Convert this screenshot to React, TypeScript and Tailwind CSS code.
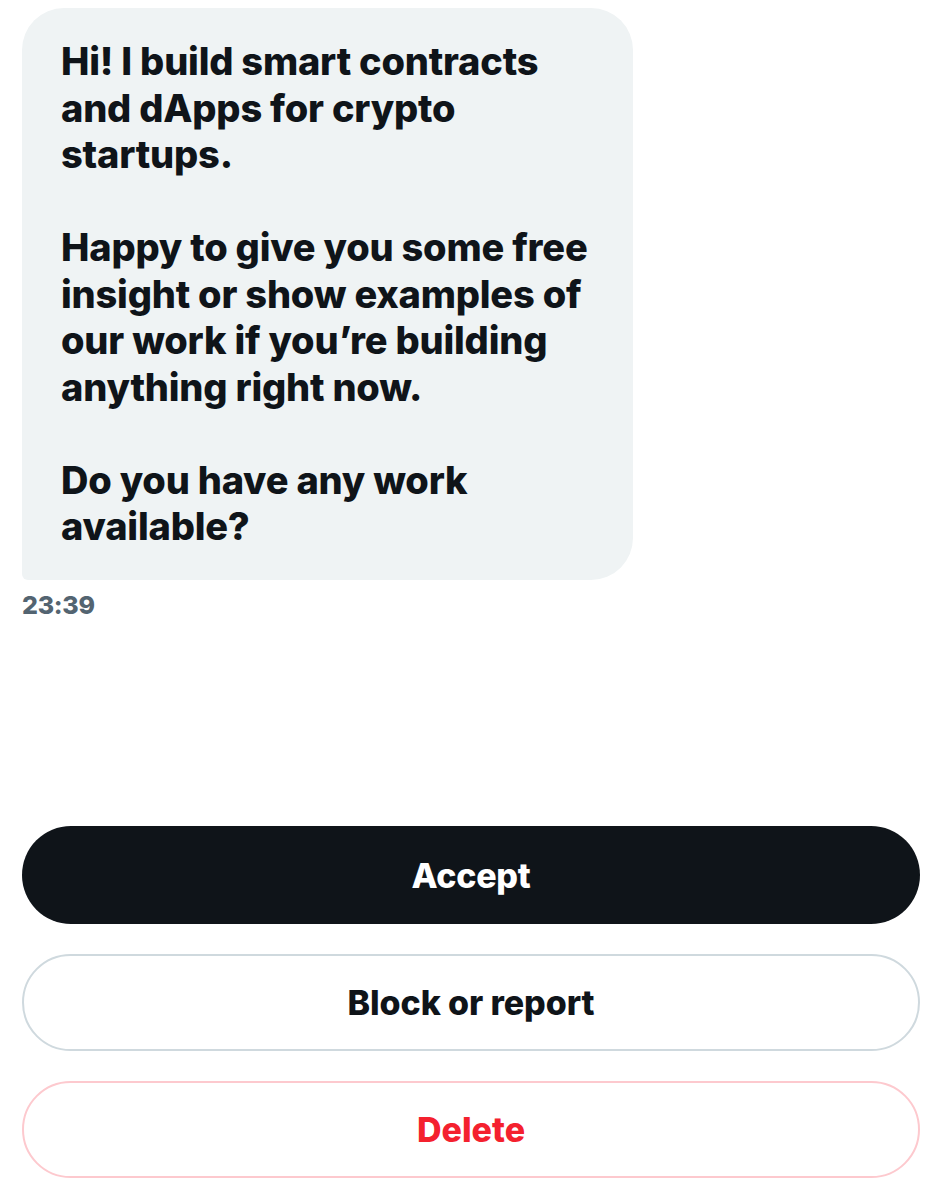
export default function App() {
  const font = { fontFamily: 'Inter, "Liberation Sans", sans-serif' };
  return (
    <div
      className="flex min-h-[1200px] w-[942px] flex-col bg-white px-[22px] pb-[22px] pt-[8px]"
      style={font}
    >
      <div className="w-[611px] rounded-t-[42px] rounded-br-[42px] rounded-bl-[6px] bg-[#eff3f4] pl-[39px] pr-[20px] pt-[30px] pb-[30px]">
        <div className="whitespace-nowrap text-[38px] font-extrabold leading-[46.5px] tracking-[-0.2px] text-[#0f1419]">
          <p>
            Hi! I build smart contracts
            <br />
            and dApps for crypto
            <br />
            startups.
          </p>
          <p className="mt-[46.5px]">
            Happy to give you some free
            <br />
            insight or show examples of
            <br />
            our work if you’re building
            <br />
            anything right now.
          </p>
          <p className="mt-[46.5px]">
            Do you have any work
            <br />
            available?
          </p>
        </div>
      </div>
      <div className="mt-[12px] text-[25px] font-extrabold leading-[26px] tracking-[-0.3px] text-[#536471]">23:39</div>

      <div className="flex-1" />

      <div className="flex flex-col gap-[30px]">
        <button className="h-[98px] w-full rounded-full bg-[#0f1419] text-[34px] font-extrabold tracking-[-0.3px] text-white">
          Accept
        </button>
        <button className="h-[97px] w-full rounded-full border-2 border-[#cfd9de] bg-white text-[34px] font-extrabold tracking-[-0.1px] text-[#0f1419]">
          Block or report
        </button>
        <button className="h-[97px] w-full rounded-full border-2 border-[#fdc9ce] bg-white text-[34px] font-extrabold tracking-[0px] text-[#f4212e]">
          Delete
        </button>
      </div>
    </div>
  );
}
